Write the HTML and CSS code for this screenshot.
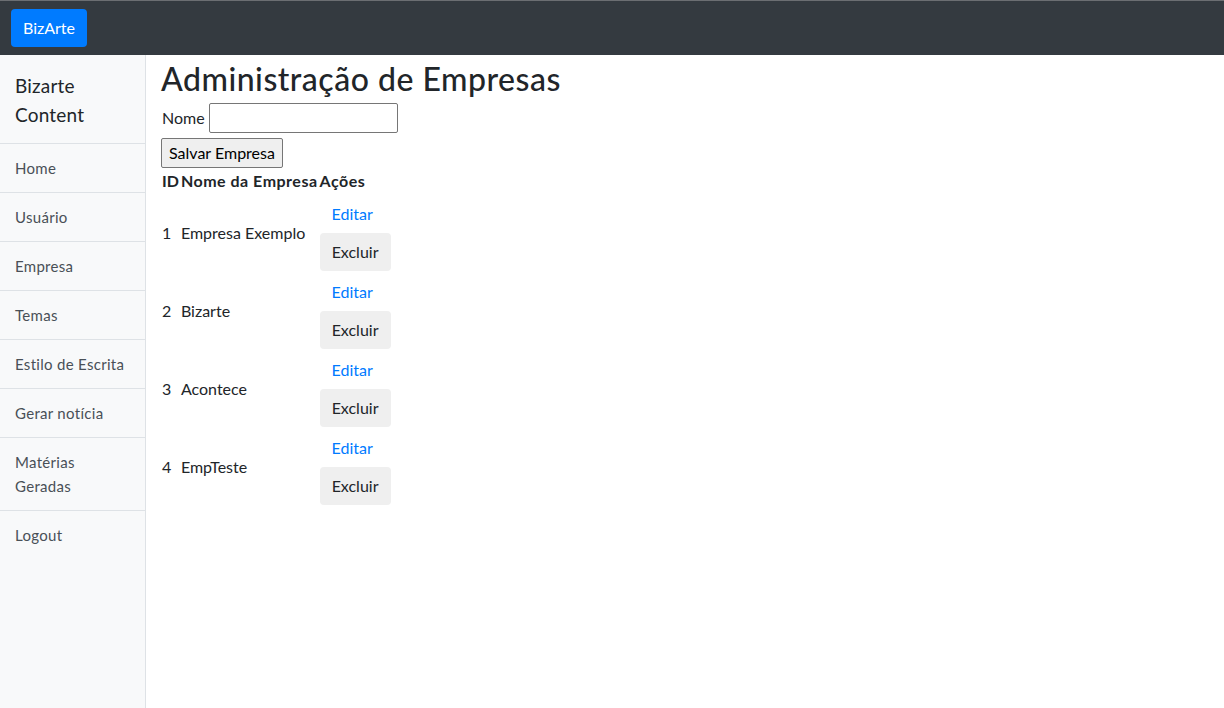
FILE: index.html
```html
<!DOCTYPE html>
<html lang="pt-BR">
<head>
<meta charset="utf-8">
<title>BizArte</title>
<link rel="stylesheet" href="styles.css">
</head>
<body>
<nav class="topbar">
  <a class="brand-btn" href="#">BizArte</a>
</nav>
<div class="layout">
  <aside class="sidebar">
    <div class="sidebar-title">Bizarte Content</div>
    <a class="side-item" href="#">Home</a>
    <a class="side-item" href="#">Usuário</a>
    <a class="side-item" href="#">Empresa</a>
    <a class="side-item" href="#">Temas</a>
    <a class="side-item" href="#">Estilo de Escrita</a>
    <a class="side-item" href="#">Gerar notícia</a>
    <a class="side-item" href="#">Matérias Geradas</a>
    <a class="side-item side-item-last" href="#">Logout</a>
  </aside>
  <main class="main">
    <h1 class="title">Administração de Empresas</h1>
    <form class="form">
      <div class="field">
        <label class="field-label" for="nome">Nome</label>
        <input class="field-input" id="nome" type="text">
      </div>
      <button class="save-btn" type="button">Salvar Empresa</button>
    </form>
    <table class="grid">
      <thead>
        <tr><th class="col-id">ID</th><th>Nome da Empresa</th><th>Ações</th></tr>
      </thead>
      <tbody>
        <tr><td>1</td><td>Empresa Exemplo</td><td class="actions"><a class="link-btn" href="#">Editar</a><button class="del-btn" type="button">Excluir</button></td></tr>
        <tr><td>2</td><td>Bizarte</td><td class="actions"><a class="link-btn" href="#">Editar</a><button class="del-btn" type="button">Excluir</button></td></tr>
        <tr><td>3</td><td>Acontece</td><td class="actions"><a class="link-btn" href="#">Editar</a><button class="del-btn" type="button">Excluir</button></td></tr>
        <tr><td>4</td><td>EmpTeste</td><td class="actions"><a class="link-btn" href="#">Editar</a><button class="del-btn" type="button">Excluir</button></td></tr>
      </tbody>
    </table>
  </main>
</div>
</body>
</html>
```
FILE: styles.css
```css
* { box-sizing: border-box; }
html, body { height: 100%; }
body {
  margin: 0;
  font-family: "Lato", "Liberation Sans", sans-serif;
  font-size: 16px;
  line-height: 1.5;
  color: #212529;
  background: #fff;
  display: flex;
  flex-direction: column;
}
a { text-decoration: none; }
.topbar {
  height: 55px;
  flex: none;
  background: #343a40;
  border-top: 1px solid #6b6e72;
  padding: 8px 11px;
  display: flex;
  align-items: flex-start;
}
.brand-btn {
  display: inline-block;
  background: #007bff;
  color: #fff;
  border-radius: 4px;
  padding: 7px 12px;
  height: 38px;
  width: 76px;
  line-height: 24px;
  font-size: 16px;
  text-align: center;
}
.layout {
  flex: 1;
  display: flex;
  min-height: 0;
}
.sidebar {
  width: 146px;
  flex: none;
  background: #f8f9fa;
  border-right: 1px solid #dee2e6;
  display: flex;
  flex-direction: column;
}
.sidebar-title {
  font-size: 19px;
  line-height: 29px;
  padding: 16px 15px 14px;
  color: #212529;
  border-bottom: 1px solid #dee2e6;
  letter-spacing: 0.2px;
}
.side-item {
  display: block;
  padding: 12px 15px;
  font-size: 15px;
  line-height: 24px;
  color: #495057;
  border-bottom: 1px solid #dee2e6;
  letter-spacing: 0.3px;
}
.side-item-last { border-bottom: 0; }
.main {
  flex: 1;
  padding: 0 15px;
}
.title {
  margin: 0;
  font-size: 32px;
  font-weight: 500;
  line-height: 1.5;
  color: #212529;
  letter-spacing: 0.5px;
}
.form { margin: 0; }
.field {
  display: flex;
  align-items: center;
  gap: 4px;
  height: 30px;
}
.field-label { margin: 0 0 0 1px; }
.field-input {
  width: 189px;
  height: 30px;
  border: 1px solid #767676;
  border-radius: 2px;
  padding: 1px 2px;
  font: inherit;
}
.save-btn {
  margin-top: 5px;
  height: 30px;
  width: 122px;
  padding: 1px 0;
  font: inherit;
  line-height: 24px;
  color: #000;
  background: #efefef;
  border: 1px solid #767676;
  border-radius: 2px;
  display: block;
  text-align: center;
}
.grid {
  border-collapse: collapse;
}
.grid th {
  font-weight: 700;
  text-align: left;
  padding: 1px;
  line-height: 24px;
  letter-spacing: 0.5px;
}
.grid th.col-id { letter-spacing: 0; }
.grid td {
  padding: 1px;
  line-height: 24px;
  vertical-align: middle;
}
.grid td.actions { width: 71px; }
.link-btn {
  display: inline-block;
  padding: 7px 12px;
  line-height: 24px;
  color: #007bff;
}
.del-btn {
  display: inline-block;
  padding: 7px 12px;
  line-height: 24px;
  font: inherit;
  color: #212529;
  background: #efefef;
  border: 0;
  border-radius: 4px;
  height: 38px;
  width: 71px;
}
```
